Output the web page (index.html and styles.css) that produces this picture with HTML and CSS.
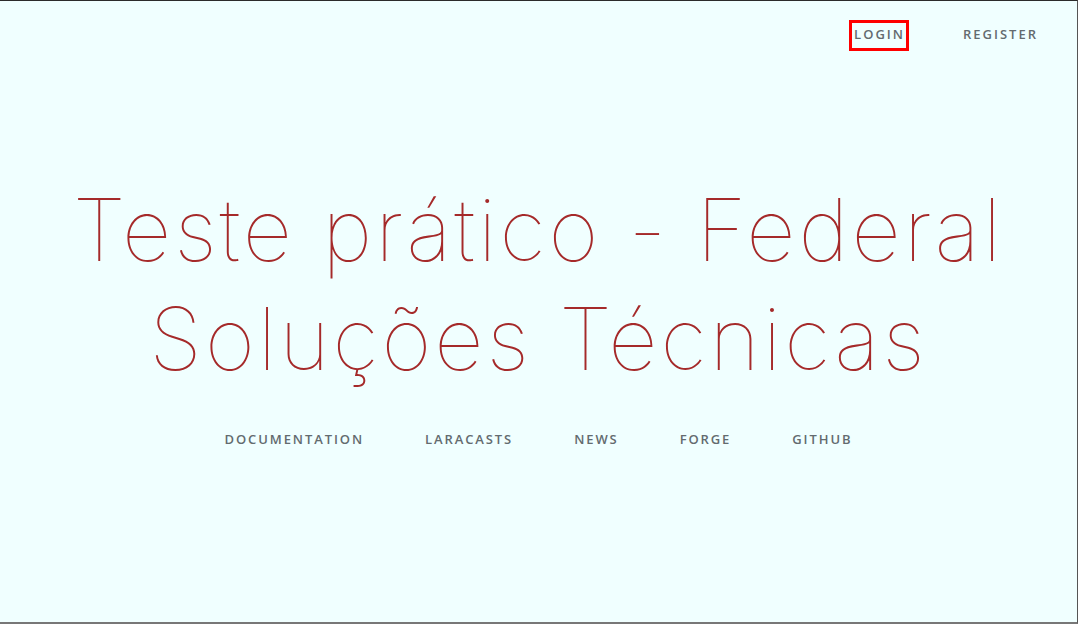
FILE: index.html
```html
<!DOCTYPE html>
<html lang="pt-BR">
<head>
<meta charset="utf-8">
<title>Teste prático</title>
<link rel="stylesheet" href="styles.css">
</head>
<body>
<div class="page">
  <header class="top-right">
    <a class="auth-link auth-link--focused" href="#">Login</a>
    <a class="auth-link" href="#">Register</a>
  </header>
  <main class="content">
    <div class="title">Teste prático - Federal<br>Soluções Técnicas</div>
    <nav class="links">
      <a href="#">Documentation</a>
      <a href="#">Laracasts</a>
      <a href="#">News</a>
      <a href="#">Forge</a>
      <a href="#">GitHub</a>
    </nav>
  </main>
</div>
</body>
</html>
```
FILE: styles.css
```css
html, body {
  margin: 0;
  padding: 0;
  background: #f0ffff;
}
.page {
  box-sizing: border-box;
  width: 1078px;
  height: 624px;
  border-top: 1px solid #2b2b2b;
  border-right: 1px solid #555;
  border-bottom: 2px solid #777;
  background: #f0ffff;
  display: flex;
  flex-direction: column;
  font-family: "Open Sans", "Liberation Sans", sans-serif;
}
.top-right {
  height: 56px;
  display: flex;
  justify-content: flex-end;
  align-items: flex-start;
  padding: 19px 35px 0 0;
  gap: 49px;
  box-sizing: border-box;
}
.auth-link {
  color: #636b6f;
  font-size: 13px;
  font-weight: 600;
  letter-spacing: 2px;
  text-decoration: none;
  text-transform: uppercase;
  line-height: 22px;
  padding: 0 1px 3px 2px;
  border: 3px solid transparent;
}
.auth-link--focused {
  border-color: #ff0000;
}
.content {
  flex: 1;
  display: flex;
  flex-direction: column;
  align-items: center;
  justify-content: center;
  padding-bottom: 56px;
}
.title {
  color: #a52a2a;
  font-family: "Inter", "Lato", sans-serif;
  font-weight: 100;
  font-size: 86px;
  line-height: 109px;
  letter-spacing: 3px;
  text-align: center;
  margin-bottom: 36px;
}
.links {
  display: flex;
  gap: 61px;
}
.links a {
  color: #636b6f;
  font-size: 13px;
  font-weight: 600;
  letter-spacing: 1.9px;
  text-decoration: none;
  text-transform: uppercase;
}
```
